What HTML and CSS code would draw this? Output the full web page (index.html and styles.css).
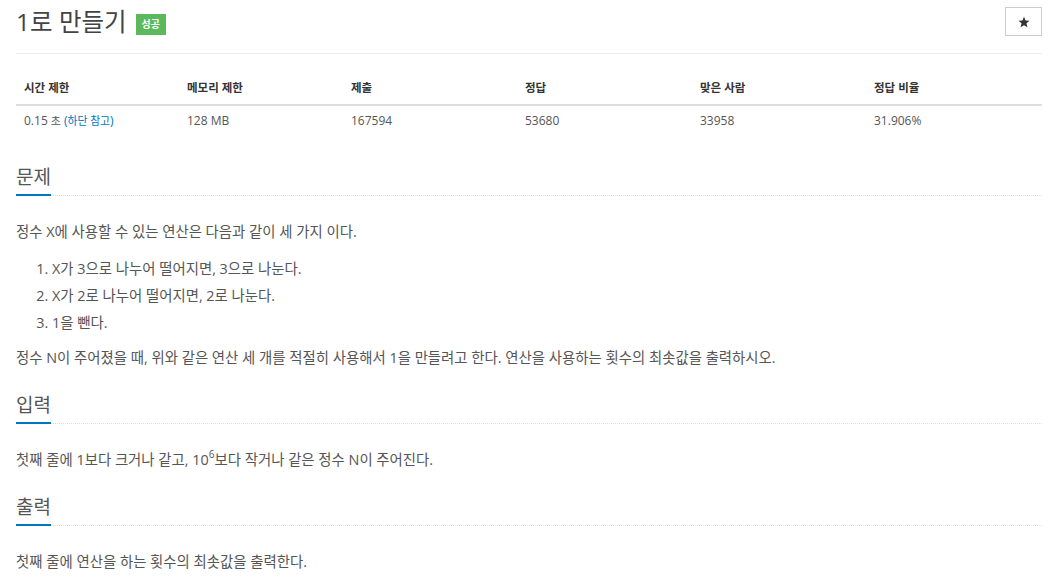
FILE: index.html
```html
<!DOCTYPE html>
<html lang="ko">
<head>
<meta charset="utf-8">
<title>1로 만들기</title>
<link rel="stylesheet" href="styles.css">
</head>
<body>
<div class="container">
  <div class="page-header">
    <h1 class="title">1로 만들기 <span class="label-success">성공</span></h1>
    <button class="star-btn" aria-label="star">
      <svg width="12" height="12" viewBox="0 0 24 24"><path d="M12 1.5l3.1 7.3 7.9.7-6 5.2 1.8 7.8L12 18.4l-6.8 4.1 1.8-7.8-6-5.2 7.9-.7z" fill="#333"/></svg>
    </button>
  </div>

  <table class="info-table">
    <thead>
      <tr>
        <th class="c1">시간 제한</th>
        <th class="c2">메모리 제한</th>
        <th class="c3">제출</th>
        <th class="c4">정답</th>
        <th class="c5">맞은 사람</th>
        <th class="c6">정답 비율</th>
      </tr>
    </thead>
    <tbody>
      <tr>
        <td>0.15 <span class="ko">초</span> <a class="link" href="#">(<span class="ko">하단 참고</span>)</a></td>
        <td>128 MB</td>
        <td>167594</td>
        <td>53680</td>
        <td>33958</td>
        <td>31.906%</td>
      </tr>
    </tbody>
  </table>

  <section class="problem-section">
    <div class="headline"><h2>문제</h2></div>
    <div class="problem-text">
      <p>정수 X에 사용할 수 있는 연산은 다음과 같이 세 가지 이다.</p>
      <ol>
        <li>X가 3으로 나누어 떨어지면, 3으로 나눈다.</li>
        <li>X가 2로 나누어 떨어지면, 2로 나눈다.</li>
        <li>1을 뺀다.</li>
      </ol>
      <p>정수 N이 주어졌을 때, 위와 같은 연산 세 개를 적절히 사용해서 1을 만들려고 한다. 연산을 사용하는 횟수의 최솟값을 출력하시오.</p>
    </div>
  </section>

  <section class="problem-section">
    <div class="headline"><h2>입력</h2></div>
    <div class="problem-text">
      <p>첫째 줄에 1보다 크거나 같고, 10<sup>6</sup>보다 작거나 같은 정수 N이 주어진다.</p>
    </div>
  </section>

  <section class="problem-section">
    <div class="headline"><h2>출력</h2></div>
    <div class="problem-text">
      <p>첫째 줄에 연산을 하는 횟수의 최솟값을 출력한다.</p>
    </div>
  </section>
</div>
</body>
</html>
```

FILE: styles.css
```css
* { box-sizing: border-box; }
html, body { margin: 0; padding: 0; background: #fff; }
body {
  font-family: "Open Sans", "Noto Sans CJK KR", sans-serif;
  font-size: 13px;
  color: #555;
}
.container {
  padding: 0 10px 0 16px;
}
.page-header {
  display: flex;
  justify-content: space-between;
  align-items: flex-start;
  border-bottom: 1px solid #eee;
  height: 54px;
}
.title {
  margin: 0;
  padding-top: 2px;
  font-size: 24.5px;
  font-weight: 400;
  line-height: 40px;
  color: #444;
  display: flex;
  align-items: center;
  gap: 9px;
}
.label-success {
  display: inline-block;
  background: #5cb85c;
  color: #fff;
  font-size: 10px;
  font-weight: 700;
  line-height: 21px;
  padding: 0 6px;
  margin-top: 4px;
}
.star-btn {
  margin-top: 7px;
  width: 37px;
  height: 29px;
  border: 1px solid #ccc;
  background: #fff;
  display: flex;
  align-items: center;
  justify-content: center;
  padding: 0;
}
.info-table {
  width: 100%;
  border-collapse: collapse;
  margin-top: 19px;
}
.info-table th {
  text-align: left;
  font-weight: 700;
  color: #333;
  font-size: 11.5px;
  padding: 5px 8px 6px;
  border-bottom: 2px solid #ddd;
  line-height: 20px;
}
.info-table td {
  text-align: left;
  font-size: 12px;
  padding: 5px 8px 8px;
  line-height: 20px;
  color: #555;
}
.info-table .ko { font-size: 10.8px; }
.c1 { width: 163px; }
.c2 { width: 164px; }
.c3 { width: 174px; }
.c4 { width: 175px; }
.c5 { width: 174px; }
.link { color: #0076c0; text-decoration: none; }

.problem-section { margin-top: 20px; }
.info-table + .problem-section { margin-top: 24px; }
.headline {
  border-bottom: 1px dotted #ddd;
  height: 33px;
}
.headline h2 {
  display: inline-block;
  margin: 0;
  font-size: 19px;
  font-weight: 400;
  line-height: 28px;
  color: #555;
  border-bottom: 2px solid #0076c0;
  height: 33px;
}
.problem-text {
  padding-top: 22px;
  font-size: 14.4px;
  line-height: 27px;
}
.problem-text p { margin: 0 0 10px; }
.problem-text ol { margin: 0 0 8px; padding-left: 36px; }
.problem-text sup { font-size: 10px; line-height: 0; position: relative; top: -1px; }
```
